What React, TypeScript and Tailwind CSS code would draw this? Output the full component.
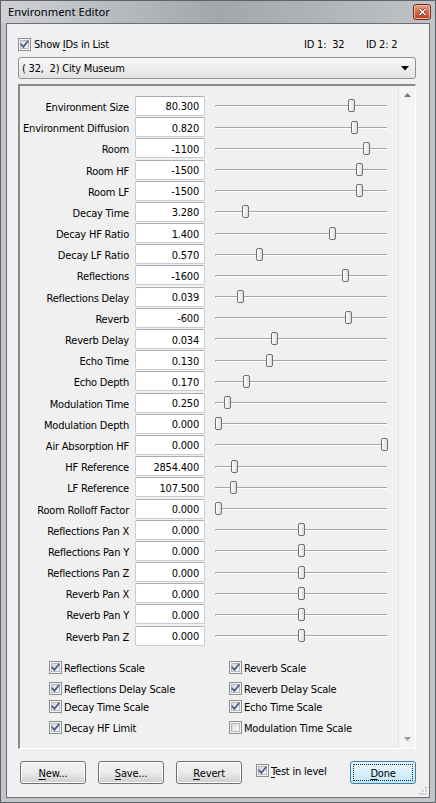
import React from "react";

type Row = { label: string; value: string; thumb: number };

const rows: Row[] = [
  { label: "Environment Size", value: "80.300", thumb: 352 },
  { label: "Environment Diffusion", value: "0.820", thumb: 355 },
  { label: "Room", value: "-1100", thumb: 367 },
  { label: "Room HF", value: "-1500", thumb: 360 },
  { label: "Room LF", value: "-1500", thumb: 360 },
  { label: "Decay Time", value: "3.280", thumb: 246 },
  { label: "Decay HF Ratio", value: "1.400", thumb: 333 },
  { label: "Decay LF Ratio", value: "0.570", thumb: 260 },
  { label: "Reflections", value: "-1600", thumb: 346 },
  { label: "Reflections Delay", value: "0.039", thumb: 241 },
  { label: "Reverb", value: "-600", thumb: 349 },
  { label: "Reverb Delay", value: "0.034", thumb: 275 },
  { label: "Echo Time", value: "0.130", thumb: 270 },
  { label: "Echo Depth", value: "0.170", thumb: 247 },
  { label: "Modulation Time", value: "0.250", thumb: 228 },
  { label: "Modulation Depth", value: "0.000", thumb: 219 },
  { label: "Air Absorption HF", value: "0.000", thumb: 385 },
  { label: "HF Reference", value: "2854.400", thumb: 235 },
  { label: "LF Reference", value: "107.500", thumb: 234 },
  { label: "Room Rolloff Factor", value: "0.000", thumb: 219 },
  { label: "Reflections Pan X", value: "0.000", thumb: 302 },
  { label: "Reflections Pan Y", value: "0.000", thumb: 302 },
  { label: "Reflections Pan Z", value: "0.000", thumb: 302 },
  { label: "Reverb Pan X", value: "0.000", thumb: 302 },
  { label: "Reverb Pan Y", value: "0.000", thumb: 302 },
  { label: "Reverb Pan Z", value: "0.000", thumb: 302 },
];

function Check({ checked }: { checked: boolean }) {
  return (
    <span className="relative inline-block w-[13px] h-[13px] shrink-0 border border-[#8e8f8f] bg-[#f4f4f4]">
      <span className="absolute inset-[1px] border border-[#b5bac2] bg-gradient-to-br from-[#d6d9de] to-[#f8f8f9]" />
      {checked && (
        <svg className="absolute left-0 top-0" width="11" height="11" viewBox="0 0 11 11">
          <path d="M2.2 5.4 L4.4 7.9 L8.8 2.4" fill="none" stroke="#4a5b87" strokeWidth="1.7" strokeLinecap="square" />
        </svg>
      )}
    </span>
  );
}

function Btn({ children, primary }: { children: React.ReactNode; primary?: boolean }) {
  if (primary) {
    return (
      <div className="relative w-[66px] h-[23px] rounded-[3px] border border-[#3c7fb1] bg-gradient-to-b from-[#eaf6fd] via-[#d9f0fc] to-[#bee6fd] flex items-center justify-center">
        <span className="absolute inset-[2px] border border-dotted border-[#202020]" />
        <span className="relative leading-none pt-[2px]">{children}</span>
      </div>
    );
  }
  return (
    <div className="w-[66px] h-[23px] rounded-[3px] border border-[#707070] bg-gradient-to-b from-[#f2f2f2] via-[#ebebeb] to-[#cfcfcf] shadow-[inset_0_0_0_1px_#fcfcfc] flex items-center justify-center leading-none pt-[2px]">
      {children}
    </div>
  );
}

function U({ c }: { c: string }) {
  return <span className="underline underline-offset-2">{c}</span>;
}

function CheckRow({ label, checked = true, cls = "" }: { label: string; checked?: boolean; cls?: string }) {
  return (
    <div className={"h-[20px] flex items-center " + cls}>
      <Check checked={checked} />
      <span className="ml-[2px] leading-none pt-[2px]">{label}</span>
    </div>
  );
}

export default function App() {
  return (
    <div className="w-[436px] h-[803px] bg-white font-['DejaVu_Sans_Condensed','DejaVu_Sans',sans-serif] font-stretch-condensed text-[11px] tracking-[-0.2px] text-black">
      <div className="w-[436px] h-[803px] border border-[#5f6266] bg-[#c1c4c9] flex flex-col">
        {/* Title bar */}
        <div className="h-[22px] flex items-center bg-gradient-to-r from-[#cfd1d5] via-[#a3a6ab] to-[#bfc2c7] relative">
          <span className="ml-[7px] font-['Noto_Sans',sans-serif] font-stretch-normal tracking-normal text-[11.2px] leading-none">Environment Editor</span>
          <div className="ml-auto mr-[4px] w-[18px] h-[16px] rounded-[3px] border border-[#7a2a1c] bg-gradient-to-b from-[#e9a78f] via-[#d56a4c] to-[#c03c1f] flex items-center justify-center shadow-[inset_0_0_0_1px_#f0b8a4]">
            <svg width="9" height="8" viewBox="0 0 9 8">
              <path d="M1.5 1 L7.5 7 M7.5 1 L1.5 7" stroke="#5a2114" strokeWidth="2.6" />
              <path d="M1.5 1 L7.5 7 M7.5 1 L1.5 7" stroke="#ffffff" strokeWidth="1.6" />
            </svg>
          </div>
        </div>
        {/* Client area */}
        <div className="mx-[5px] mb-[4px] flex-1 border border-[#6b6e72] bg-[#f0f0f0] relative">
          <div className="ml-[11px] w-[398px] flex flex-col">
            {/* top row */}
            <div className="mt-[10px] h-[20px] flex items-center">
              <div className="w-[286px] flex items-center">
                <Check checked />
                <span className="ml-[3px] leading-none pt-[1px]">
                  Show <U c="I" />Ds in List
                </span>
              </div>
              <span className="w-[62px] leading-none whitespace-pre pt-[1px]">ID 1:  32</span>
              <span className="leading-none whitespace-pre pt-[1px]">ID 2: 2</span>
            </div>
            {/* combo */}
            <div className="mt-[3px] h-[22px] rounded-[3px] border border-[#8f9296] bg-gradient-to-b from-[#f7f7f7] to-[#e3e3e3] flex items-center pl-[3px] pr-[6px]">
              <span className="whitespace-pre leading-none pt-[1px]">( 32,  2) City Museum</span>
              <svg className="ml-auto" width="8" height="5" viewBox="0 0 8 5">
                <path d="M0 0 H8 L4 4.5 Z" fill="#000" />
              </svg>
            </div>
            {/* panel */}
            <div className="mt-[5px] h-[665px] border-t-2 border-l-2 border-t-[#8a8a8a] border-l-[#8a8a8a] border-r border-b border-r-[#ffffff] border-b-[#ffffff] flex">
              <div className="w-[378px] flex flex-col">
                <div className="h-[9.4px]" />
                {rows.map((r) => (
                  <div key={r.label} className="h-[21.2px] flex items-center shrink-0">
                    <div className="w-[109px] flex justify-end whitespace-nowrap leading-none pt-[3px]">{r.label}</div>
                    <div className="ml-[6px] w-[70px] h-[20px] rounded-[2px] border border-[#c9ccd2] border-t-[#abadb3] bg-white flex items-center justify-end pr-[5px] pt-[2px] leading-none">
                      {r.value}
                    </div>
                    <div className="relative w-[192px] h-full">
                      <div className="absolute left-[10px] w-[172px] top-[10px] h-[2px] border-t border-[#a5a5a5] border-b border-b-white border-l border-l-[#a5a5a5]" />
                      <div
                        className="absolute top-[4px] w-[7px] h-[13px] rounded-[2px] border border-[#707070] bg-gradient-to-r from-[#ffffff] to-[#dcdcdc]"
                        style={{ left: r.thumb - 206 - 3.5 }}
                      />
                    </div>
                  </div>
                ))}
                {/* checkboxes */}
                <div className="mt-[11px] ml-[29px] grid grid-cols-[180px_1fr]">
                  <CheckRow label="Reflections Scale" />
                  <CheckRow label="Reverb Scale" />
                  <CheckRow label="Reflections Delay Scale" cls="mt-[1px]" />
                  <CheckRow label="Reverb Delay Scale" cls="mt-[1px]" />
                  <CheckRow label="Decay Time Scale" cls="-mt-[2px]" />
                  <CheckRow label="Echo Time Scale" cls="-mt-[2px]" />
                  <CheckRow label="Decay HF Limit" cls="mt-[1px]" />
                  <CheckRow label="Modulation Time Scale" checked={false} cls="mt-[1px]" />
                </div>
              </div>
              {/* scrollbar */}
              <div className="flex-1 border-l border-[#e4e4e4] bg-[#f4f4f4] flex flex-col items-center justify-between py-[7px]">
                <svg width="7" height="4" viewBox="0 0 7 4"><path d="M0 4 H7 L3.5 0 Z" fill="#7a7a7a" /></svg>
                <svg width="7" height="4" viewBox="0 0 7 4"><path d="M0 0 H7 L3.5 4 Z" fill="#9a9a9a" /></svg>
              </div>
            </div>
            {/* buttons */}
            <div className="mt-[12px] ml-[2px] flex items-start">
              <Btn><U c="N" />ew...</Btn>
              <div className="ml-[12px]"><Btn><U c="S" />ave...</Btn></div>
              <div className="ml-[12px]"><Btn><U c="R" />evert</Btn></div>
              <div className="ml-[14px] mt-[3px] h-[13px] flex items-center">
                <Check checked />
                <span className="ml-[2px] leading-none pt-[1px]"><U c="T" />est in level</span>
              </div>
              <div className="ml-auto"><Btn primary><U c="D" />one</Btn></div>
            </div>
          </div>
          {/* resize grip */}
          <svg className="absolute right-[2px] bottom-[2px]" width="10" height="10" viewBox="0 0 10 10">
            <rect x="8" y="2" width="1.5" height="1.5" fill="#b0b0b0" />
            <rect x="5" y="5" width="1.5" height="1.5" fill="#b0b0b0" />
            <rect x="8" y="5" width="1.5" height="1.5" fill="#b0b0b0" />
            <rect x="2" y="8" width="1.5" height="1.5" fill="#b0b0b0" />
            <rect x="5" y="8" width="1.5" height="1.5" fill="#b0b0b0" />
            <rect x="8" y="8" width="1.5" height="1.5" fill="#b0b0b0" />
          </svg>
        </div>
      </div>
    </div>
  );
}
